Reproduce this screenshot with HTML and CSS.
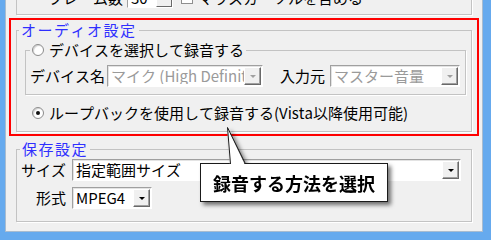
FILE: index.html
```html
<!DOCTYPE html>
<html lang="ja">

<head>
    <meta charset="UTF-8">
    <meta name="viewport" content="width=device-width, initial-scale=1.0">
    <title>録音設定</title>
    <link rel="stylesheet" href="styles.css">
</head>

<body>

    <div class="desk">
        <div class="window">

            <!-- upper group, mostly scrolled out of view -->
            <fieldset class="group group-top">
                <div class="top-row">
                    <span class="frame-label">フレーム数</span>
                    <span class="spin"><span class="spin-val">30</span><span class="spin-btn"></span></span>
                    <span class="check"></span>
                    <span class="check-text">マウスカーソルを含める</span>
                </div>
            </fieldset>

            <div class="highlight">
                <fieldset class="group group-audio">
                    <legend class="title">オーディオ設定</legend>

                    <fieldset class="sub">
                        <legend class="option"><span class="radio"></span>デバイスを選択して録音する</legend>
                        <div class="device-row">
                            <span class="device-label">デバイス名</span>
                            <span class="combo off device-combo">
                                <span class="combo-text">マイク (High Definitic</span>
                                <span class="combo-btn"></span>
                            </span>
                            <span class="source-label">入力元</span>
                            <span class="combo off source-combo">
                                <span class="combo-text">マスター音量</span>
                                <span class="combo-btn"></span>
                            </span>
                        </div>
                    </fieldset>

                    <div class="option loopback"><span class="radio checked"></span>ループバックを使用して録音する(Vista以降使用可能)</div>
                </fieldset>
            </div>

            <fieldset class="group group-save">
                <legend class="title">保存設定</legend>
                <div class="save-row">
                    <span class="save-label">サイズ</span>
                    <span class="combo size-combo">
                        <span class="combo-text">指定範囲サイズ</span>
                        <span class="combo-btn"></span>
                    </span>
                </div>
                <div class="save-row">
                    <span class="save-label">形式</span>
                    <span class="combo format-combo">
                        <span class="combo-text">MPEG4</span>
                        <span class="combo-btn"></span>
                    </span>
                </div>
            </fieldset>

            <div class="callout">
                <svg class="pointer" width="30" height="42" viewBox="0 0 30 42">
                    <polygon points="6,4 9,42 24,42" fill="#fff" />
                    <polyline points="9.5,41 6.5,4.5 24.5,41" fill="none" stroke="#1a1a1a" stroke-width="1" />
                </svg>
                録音する方法を選択
            </div>

        </div>
    </div>

</body>

</html>
```

FILE: styles.css
```css
* {
    box-sizing: border-box;
}

body {
    margin: 0;
    font-family: "Noto Sans CJK JP", sans-serif;
    font-size: 15px;
    line-height: 16px;
    font-kerning: none;
    color: #000;
}

.desk {
    height: 240px;
    overflow: hidden;
    background: #66aaee;
    padding: 0 8px 8px 5px;
}

.window {
    display: flow-root;
    position: relative;
    background: #f0f0f0;
    border: 1px solid #a9bccf;
    border-top: 0;
    padding-bottom: 9px;
}

fieldset {
    margin: 0;
    min-width: 0;
}

.group {
    margin: 0 10px;
    border: 1px solid #c3c3c3;
    box-shadow: 1px 1px 0 #fff;
}

.title {
    padding: 0 2px;
    color: #2f2fff;
    font-size: 15px;
    line-height: 16px;
    letter-spacing: 1.5px;
}

/* upper group */

.group-top {
    margin-top: -30px;
    padding: 16px 0 5px 31px;
}

.top-row {
    display: flex;
    align-items: center;
    height: 22px;
}

.frame-label {
    width: 79px;
}

.spin {
    display: flex;
    align-items: center;
    width: 46px;
    height: 20px;
    background: #fff;
    border: 1px solid;
    border-color: #a0a0a0 #fff #fff #a0a0a0;
    padding-left: 3px;
}

.spin-val {
    flex: 1;
}

.spin-btn {
    width: 16px;
    height: 18px;
    background: #f0f0f0;
    border: 1px solid;
    border-color: #fff #696969 #696969 #fff;
}

.check {
    width: 12px;
    height: 12px;
    margin-left: 8px;
    background: #fff;
    border: 1px solid #8f8f8f;
}

.check-text {
    margin-left: 5px;
}

/* audio group with the red highlight */

.highlight {
    margin: 3px 3px 0 3px;
    border: 2px solid #f00;
    padding: 2px 5px 2px 5px;
}

.group-audio {
    margin: 0;
    padding: 0 5px 10px 8px;
}

.group-audio > .title {
    margin-left: -6px;
}

.sub {
    margin-top: 4px;
    border: 1px solid #c3c3c3;
    box-shadow: 1px 1px 0 #fff;
    padding: 7px 0 7px 4px;
}

.sub > legend {
    padding: 0 2px;
}

.option {
    display: flex;
    align-items: center;
    height: 16px;
}

.radio {
    width: 12px;
    height: 12px;
    margin-right: 5px;
    border-radius: 50%;
    background: #fff;
    border: 1px solid #8c8c8c;
    box-shadow: inset 1px 1px 1px #d0d0d0;
    display: flex;
    align-items: center;
    justify-content: center;
}

.radio.checked::before {
    content: "";
    width: 4px;
    height: 4px;
    border-radius: 50%;
    background: #111;
}

.loopback {
    margin: 10px 0 0 7px;
}

.device-row {
    display: flex;
    align-items: center;
    height: 22px;
}

.device-label {
    width: 77px;
}

.device-combo {
    width: 156px;
}

.source-label {
    margin: 0 5px 0 17px;
}

.source-combo {
    width: 130px;
}

/* combo boxes */

.combo {
    display: flex;
    align-items: center;
    height: 22px;
    background: #fff;
    border: 1px solid;
    border-color: #a0a0a0 #fff #fff #a0a0a0;
    box-shadow: inset 1px 1px 0 #e3e3e3;
    padding: 0 1px 0 3px;
}

.combo-text {
    flex: 1;
    overflow: hidden;
    white-space: nowrap;
}

.combo-btn {
    display: flex;
    align-items: center;
    justify-content: center;
    width: 17px;
    height: 18px;
    background: #f0f0f0;
    border: 1px solid;
    border-color: #fff #696969 #696969 #fff;
    box-shadow: inset -1px -1px 0 #a0a0a0;
}

.combo-btn::before {
    content: "";
    border-top: 3px solid #000;
    border-left: 3px solid transparent;
    border-right: 3px solid transparent;
}

.combo.off .combo-text {
    color: #9a9a9a;
}

.combo.off .combo-btn::before {
    border-top-color: #a0a0a0;
}

/* save group */

.group-save {
    margin-top: 5px;
    padding: 2px 10px 12px 3px;
}

.save-row {
    display: flex;
    align-items: center;
    gap: 6px;
}

.save-row + .save-row {
    margin-top: 6px;
}

.save-label {
    width: 46px;
    text-align: right;
}

.size-combo {
    width: 390px;
}

.format-combo {
    width: 80px;
}

/* callout balloon */

.callout {
    position: absolute;
    left: 194px;
    top: 163px;
    width: 188px;
    height: 39px;
    display: flex;
    align-items: center;
    justify-content: center;
    background: #fff;
    border: 1px solid #1a1a1a;
    font-size: 18px;
    font-weight: bold;
    filter: drop-shadow(3px 3px 2px rgba(0, 0, 0, 0.55));
}

.pointer {
    position: absolute;
    left: 20px;
    top: -41px;
}
```
